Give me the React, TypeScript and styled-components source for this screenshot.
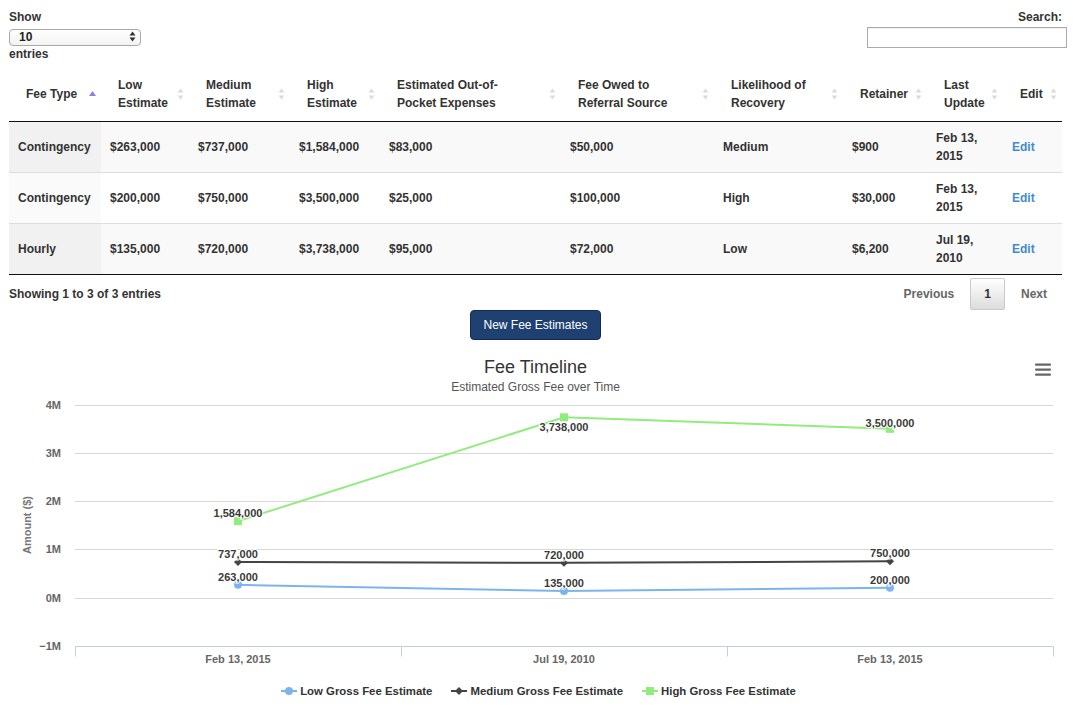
import React from "react";
import styled, { createGlobalStyle } from "styled-components";

const GlobalStyle = createGlobalStyle`
  html, body { margin: 0; padding: 0; background: #fff; }
  body { font-family: "Liberation Sans", Arial, Helvetica, sans-serif; color: #333; }
  * { box-sizing: border-box; }
`;

const Page = styled.div`
  width: 1079px;
  padding: 8px 17px 0 9px;
`;

const TopBar = styled.div`
  display: flex;
  justify-content: space-between;
  align-items: flex-start;
  font-size: 12px;
  font-weight: bold;
  line-height: 18px;
`;

const LengthControl = styled.div`
  display: flex;
  flex-direction: column;
  align-items: flex-start;
`;

const SelectWrap = styled.div`
  position: relative;
  width: 132px;
  height: 17px;
  margin-top: 2px;
`;

const Select = styled.select`
  appearance: none;
  -webkit-appearance: none;
  width: 100%;
  height: 17px;
  border: 1px solid #a9a9a9;
  border-radius: 4px;
  background: linear-gradient(#ffffff, #f3f3f3);
  font-family: "Liberation Sans", Arial, sans-serif;
  font-size: 12px;
  font-weight: bold;
  color: #222;
  padding: 0 0 0 9px;
  line-height: 15px;
  outline: none;
`;

const SelectArrows = styled.svg`
  position: absolute;
  right: 5px;
  top: 3px;
  pointer-events: none;
`;

const FilterControl = styled.label`
  display: flex;
  flex-direction: column;
  align-items: flex-end;
`;

const SearchInput = styled.input`
  width: 200px;
  height: 21px;
  margin-top: 1px;
  margin-right: -5px;
  border: 1px solid #aaa;
  border-radius: 0;
  box-shadow: inset 0 1px 1px rgba(0, 0, 0, 0.06);
  outline: none;
`;

const Table = styled.table`
  width: 1053px;
  margin-top: 3px;
  border-collapse: separate;
  border-spacing: 0;
  table-layout: fixed;
  font-size: 12px;
  font-weight: bold;
  line-height: 18px;
`;

const Th = styled.th`
  position: relative;
  padding: 10px 18px 9px 17px;
  text-align: left;
  vertical-align: middle;
  border-bottom: 1px solid #111;
  white-space: nowrap;
  font-weight: bold;
`;

const SortIcon = styled.svg`
  position: absolute;
  right: 4px;
  top: 50%;
  transform: translateY(-50%);
`;

const Td = styled.td<{ $bg: string; $top: boolean; $bottom: boolean }>`
  padding: 7px 10px 7px 9px;
  vertical-align: middle;
  background: ${(p) => p.$bg};
  border-top: ${(p) => (p.$top ? "1px solid #ddd" : "none")};
  border-bottom: ${(p) => (p.$bottom ? "1px solid #111" : "none")};
`;

const EditLink = styled.a`
  color: #428bca;
  text-decoration: none;
`;

const InfoRow = styled.div`
  display: flex;
  justify-content: space-between;
  align-items: center;
  padding-top: 3px;
  font-size: 12px;
  font-weight: bold;
  line-height: 18px;
`;

const Pagination = styled.div`
  display: flex;
  margin-right: 1px;
`;

const PageButton = styled.span<{ $current?: boolean }>`
  margin-left: 2px;
  padding: 6px 13px;
  border: 1px solid ${(p) => (p.$current ? "#cacaca" : "transparent")};
  border-radius: 2px;
  color: ${(p) => (p.$current ? "#333" : "#666")};
  background: ${(p) => (p.$current ? "linear-gradient(#ffffff, #dcdcdc)" : "transparent")};
`;

const ButtonRow = styled.div`
  display: flex;
  justify-content: center;
`;

const NewButton = styled.button`
  font-family: "Liberation Sans", Arial, sans-serif;
  font-size: 12px;
  line-height: 16px;
  color: #fff;
  background: #1f4172;
  border: 1px solid #15285a;
  border-radius: 4px;
  padding: 6px 12px;
`;

const ChartBox = styled.div`
  position: relative;
  margin-top: 2px;
`;

const ChartTitle = styled.div`
  text-align: center;
  font-size: 18px;
  line-height: 22px;
  padding-top: 14px;
  color: #333;
`;

const ChartSubtitle = styled.div`
  text-align: center;
  font-size: 12px;
  line-height: 16px;
  margin-top: 1px;
  color: #555;
`;

const MenuButton = styled.svg`
  position: absolute;
  top: 21px;
  right: 11px;
`;

const Plot = styled.svg`
  display: block;
  font-family: "Liberation Sans", Arial, sans-serif;
`;

const Legend = styled.div`
  display: flex;
  justify-content: center;
  gap: 19px;
  margin-top: 12px;
  padding-left: 6px;
  font-size: 11.4px;
  font-weight: bold;
  line-height: 16px;
  color: #333;
`;

const LegendItem = styled.div`
  display: flex;
  align-items: center;
  gap: 3px;
`;

type Col = { lines: string[]; width: number; active?: boolean };

const columns: Col[] = [
  { lines: ["Fee Type"], width: 92, active: true },
  { lines: ["Low", "Estimate"], width: 88 },
  { lines: ["Medium", "Estimate"], width: 101 },
  { lines: ["High", "Estimate"], width: 90 },
  { lines: ["Estimated Out-of-", "Pocket Expenses"], width: 181 },
  { lines: ["Fee Owed to", "Referral Source"], width: 153 },
  { lines: ["Likelihood of", "Recovery"], width: 129 },
  { lines: ["Retainer"], width: 84 },
  { lines: ["Last", "Update"], width: 76 },
  { lines: ["Edit"], width: 59 },
];

const rows = [
  ["Contingency", "$263,000", "$737,000", "$1,584,000", "$83,000", "$50,000", "Medium", "$900", "Feb 13, 2015"],
  ["Contingency", "$200,000", "$750,000", "$3,500,000", "$25,000", "$100,000", "High", "$30,000", "Feb 13, 2015"],
  ["Hourly", "$135,000", "$720,000", "$3,738,000", "$95,000", "$72,000", "Low", "$6,200", "Jul 19, 2010"],
];

function Sort({ active }: { active?: boolean }) {
  return (
    <SortIcon width="9" height="14" viewBox="0 0 9 14">
      {active ? (
        <polygon points="4.5,4 8,9 1,9" fill="#8484e0" />
      ) : (
        <>
          <polygon points="4.5,1.5 7.5,5.5 1.5,5.5" fill="#dcdcdc" />
          <polygon points="1.5,8.5 7.5,8.5 4.5,12.5" fill="#dcdcdc" />
        </>
      )}
    </SortIcon>
  );
}

const plotLeft = 66;
const plotRight = 1044;
const zeroY = 202.5;
const unit = 48.2;
const yOf = (v: number) => zeroY - (v / 1e6) * unit;
const catW = (plotRight - plotLeft) / 3;
const cx = (i: number) => plotLeft + catW * i + catW / 2;
const categories = ["Feb 13, 2015", "Jul 19, 2010", "Feb 13, 2015"];

type Series = {
  name: string;
  color: string;
  marker: "circle" | "diamond" | "square";
  data: number[];
  labelDy: number[];
};

const series: Series[] = [
  { name: "Low Gross Fee Estimate", color: "#7cb5ec", marker: "circle", data: [263000, 135000, 200000], labelDy: [-4, -4, -4] },
  { name: "Medium Gross Fee Estimate", color: "#434348", marker: "diamond", data: [737000, 720000, 750000], labelDy: [-4, -4, -4] },
  { name: "High Gross Fee Estimate", color: "#90ed7d", marker: "square", data: [1584000, 3738000, 3500000], labelDy: [-4, 14, -2] },
];

const fmt = (v: number) => v.toLocaleString("en-US");

function Marker({ kind, x, y, color }: { kind: Series["marker"]; x: number; y: number; color: string }) {
  if (kind === "circle") return <circle cx={x} cy={y} r={4} fill={color} />;
  if (kind === "diamond")
    return <polygon points={`${x},${y - 4} ${x + 4},${y} ${x},${y + 4} ${x - 4},${y}`} fill={color} />;
  return <rect x={x - 4} y={y - 4} width={8} height={8} fill={color} />;
}

function Chart() {
  const ticks = [4, 3, 2, 1, 0];
  return (
    <Plot width="1053" height="276" viewBox="0 0 1053 276">
      {ticks.map((t) => {
        const y = Math.round(zeroY - t * unit) + 0.5;
        return <line key={t} x1={plotLeft} x2={plotRight} y1={y} y2={y} stroke="#d8d8d8" strokeWidth="1" />;
      })}
      <line x1={plotLeft} x2={plotRight} y1={251.5} y2={251.5} stroke="#c0d0e0" strokeWidth="1" />
      {[0, 1, 2, 3].map((i) => {
        const x = Math.round(plotLeft + catW * i) + 0.5;
        return <line key={i} x1={x} x2={x} y1={251.5} y2={261.5} stroke="#c0d0e0" strokeWidth="1" />;
      })}
      {[4, 3, 2, 1, 0, -1].map((t) => (
        <text key={t} x={52} y={Math.round(zeroY - t * unit) + 4} textAnchor="end" fontSize="11" fontWeight="bold" fill="#666">
          {t < 0 ? "\u2212" + Math.abs(t) : t}M
        </text>
      ))}
      <text
        x={19}
        y={130}
        transform="rotate(-90 19 130)"
        textAnchor="middle"
        fontSize="11"
        fontWeight="bold"
        fill="#777"
        dominantBaseline="middle"
      >
        Amount ($)
      </text>
      {categories.map((c, i) => (
        <text key={i} x={cx(i)} y={268} textAnchor="middle" fontSize="11" fontWeight="bold" fill="#666">
          {c}
        </text>
      ))}
      {series.map((s) => (
        <g key={s.name}>
          <polyline
            points={s.data.map((v, i) => `${cx(i)},${yOf(v)}`).join(" ")}
            fill="none"
            stroke={s.color}
            strokeWidth="2"
          />
          {s.data.map((v, i) => (
            <Marker key={i} kind={s.marker} x={cx(i)} y={yOf(v)} color={s.color} />
          ))}
          {s.data.map((v, i) => (
            <text
              key={"l" + i}
              x={cx(i)}
              y={yOf(v) + s.labelDy[i]}
              textAnchor="middle"
              fontSize="11"
              fontWeight="bold"
              fill="#3a3a3a"
              stroke="#fff"
              strokeWidth="2"
              paintOrder="stroke"
            >
              {fmt(v)}
            </text>
          ))}
        </g>
      ))}
    </Plot>
  );
}

function LegendSymbol({ s }: { s: Series }) {
  return (
    <svg width="16" height="12" viewBox="0 0 16 12">
      <line x1="0" x2="16" y1="6" y2="6" stroke={s.color} strokeWidth="2" />
      <Marker kind={s.marker} x={8} y={6} color={s.color} />
    </svg>
  );
}

export default function App() {
  return (
    <>
      <GlobalStyle />
      <Page>
        <TopBar>
          <LengthControl>
            <span>Show</span>
            <SelectWrap>
              <Select defaultValue="10">
                <option value="10">10</option>
                <option value="25">25</option>
                <option value="50">50</option>
                <option value="100">100</option>
              </Select>
              <SelectArrows width="7" height="11" viewBox="0 0 7 11">
                <polygon points="3.5,0.5 6.5,4.5 0.5,4.5" fill="#333" />
                <polygon points="0.5,6.5 6.5,6.5 3.5,10.5" fill="#333" />
              </SelectArrows>
            </SelectWrap>
            <span>entries</span>
          </LengthControl>
          <FilterControl>
            <span>Search:</span>
            <SearchInput type="search" />
          </FilterControl>
        </TopBar>

        <Table>
          <colgroup>
            {columns.map((c, i) => (
              <col key={i} style={{ width: c.width }} />
            ))}
          </colgroup>
          <thead>
            <tr>
              {columns.map((c, i) => (
                <Th key={i}>
                  {c.lines.map((l, j) => (
                    <React.Fragment key={j}>
                      {j > 0 && <br />}
                      {l}
                    </React.Fragment>
                  ))}
                  <Sort active={c.active} />
                </Th>
              ))}
            </tr>
          </thead>
          <tbody>
            {rows.map((r, ri) => {
              const odd = ri % 2 === 0;
              const last = ri === rows.length - 1;
              return (
                <tr key={ri}>
                  {r.map((cell, ci) => (
                    <Td
                      key={ci}
                      $bg={ci === 0 ? (odd ? "#f1f1f1" : "#fafafa") : odd ? "#f9f9f9" : "#ffffff"}
                      $top={ri > 0}
                      $bottom={last}
                    >
                      {cell}
                    </Td>
                  ))}
                  <Td $bg={odd ? "#f9f9f9" : "#ffffff"} $top={ri > 0} $bottom={last}>
                    <EditLink href="#">Edit</EditLink>
                  </Td>
                </tr>
              );
            })}
          </tbody>
        </Table>

        <InfoRow>
          <span>Showing 1 to 3 of 3 entries</span>
          <Pagination>
            <PageButton>Previous</PageButton>
            <PageButton $current>1</PageButton>
            <PageButton>Next</PageButton>
          </Pagination>
        </InfoRow>

        <ButtonRow>
          <NewButton type="button">New Fee Estimates</NewButton>
        </ButtonRow>

        <ChartBox>
          <ChartTitle>Fee Timeline</ChartTitle>
          <ChartSubtitle>Estimated Gross Fee over Time</ChartSubtitle>
          <MenuButton width="16" height="13" viewBox="0 0 16 13">
            <rect x="0" y="0.5" width="16" height="2.2" rx="1" fill="#666" />
            <rect x="0" y="5.5" width="16" height="2.2" rx="1" fill="#666" />
            <rect x="0" y="10.5" width="16" height="2.2" rx="1" fill="#666" />
          </MenuButton>
          <Chart />
          <Legend>
            {series.map((s) => (
              <LegendItem key={s.name}>
                <LegendSymbol s={s} />
                <span>{s.name}</span>
              </LegendItem>
            ))}
          </Legend>
        </ChartBox>
      </Page>
    </>
  );
}
